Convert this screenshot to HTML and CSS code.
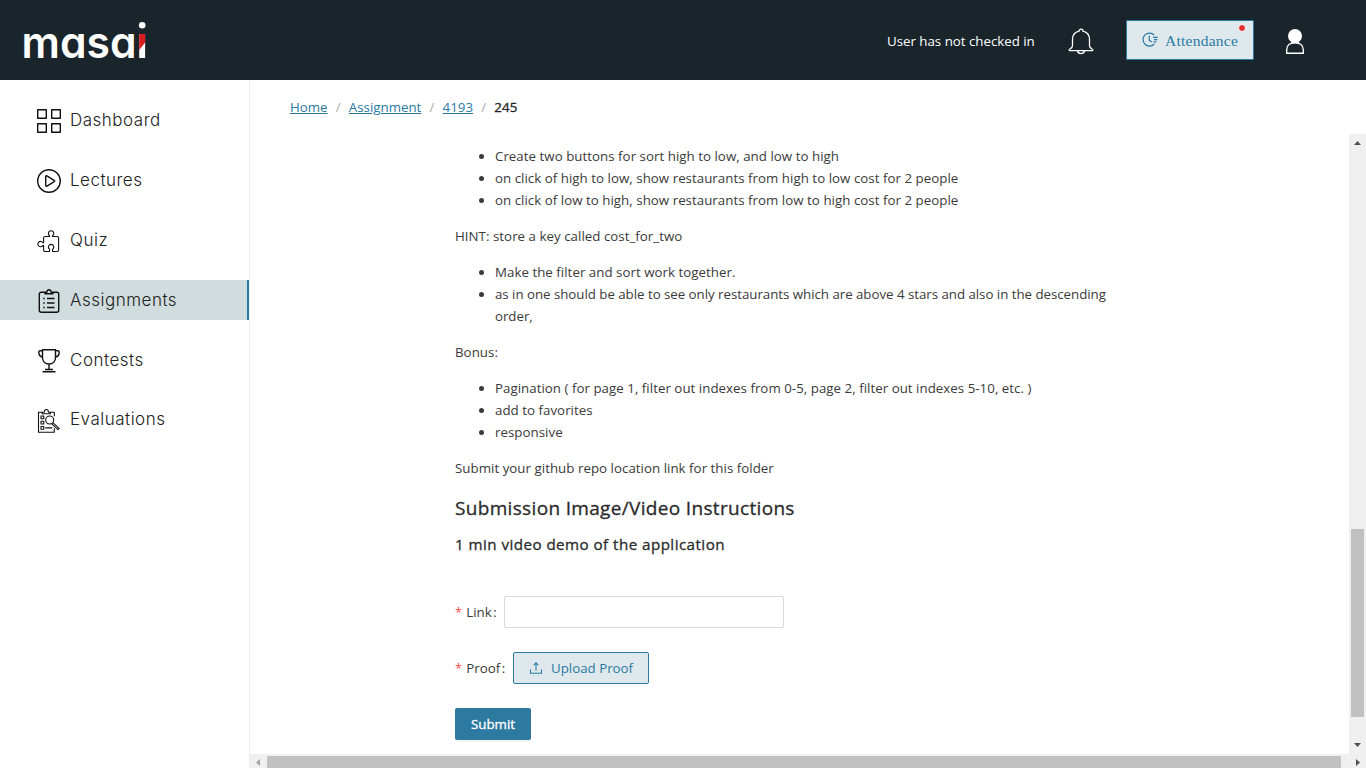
FILE: index.html
```html
<!DOCTYPE html>
<html lang="en">
<head>
<meta charset="utf-8">
<title>Masai - Assignment</title>
<link rel="stylesheet" href="styles.css">
</head>
<body>
<header class="topbar">
  <svg class="logo" width="124" height="42" viewBox="0 0 124 42" role="img" aria-label="masai">
    <text class="logo-text" x="-2.500" y="39" textLength="115" lengthAdjust="spacingAndGlyphs">masa</text>
    <path d="M115.200 15h5.900v24h-5.900z" fill="#fff"/>
    <path d="M115.200 15h5.900v8.500l-5.900 7.500z" fill="#dd1b23"/>
    <circle cx="118.200" cy="6.300" r="3.300" fill="#fff"/>
  </svg>
  <div class="top-actions">
    <span class="status">User has not checked in</span>
    <svg class="bell" width="26" height="28" viewBox="0 0 26 28" fill="none" stroke="#fff" stroke-width="1.300">
      <path d="M11 3.200C11 .5 15 .5 15 3.200c4 1 6.500 4.300 6.500 8.300v6c0 1.500.8 2.500 2.200 3.200 1.700.9 1.400 2-.2 2h-21c-1.600 0-1.900-1.100-.2-2 1.400-.7 2.200-1.700 2.200-3.200v-6c0-4 2.500-7.300 6.500-8.300zM9.500 22.700c.5 4 6.500 4 7 0"/>
    </svg>
    <button class="attendance">
      <svg width="16" height="16" viewBox="0 0 16 16" fill="none" stroke="#2a7aa3" stroke-width="1.200"><path d="M12.300 3.200A6.500 6.500 0 1 0 12.300 12M7.300 3.800v4.500l2.500 1.800M11 5.300h4.800M12 7.600h3.300M11.500 9.900h2.800"/></svg>
      <span>Attendance</span><i class="dot"></i>
    </button>
    <svg class="user" width="20" height="26" viewBox="0 0 20 26"><circle cx="10" cy="7" r="7" fill="#fff"/><path d="M1.700 24.200v-3.500c0-4.400 3.400-7 8.300-7s8.300 2.600 8.300 7v3.500z" fill="#1a242b" stroke="#fff" stroke-width="1.400"/><path d="M6 12h8v2.200H6z" fill="#fff"/></svg>
  </div>
</header>
<div class="shell">
  <nav class="sidebar">
    <a class="nav-item"><svg class="nav-icon" viewBox="0 0 24 24"><path d="M.7.700h8.600v8.600H.7zM14.700.700h8.600v8.600h-8.600zM.7 14.700h8.600v8.600H.7zM14.700 14.700h8.600v8.600h-8.600z"/></svg><span>Dashboard</span></a>
    <a class="nav-item"><svg class="nav-icon" viewBox="0 0 24 24"><circle cx="12" cy="12" r="11.300"/><path d="M8.700 7.700c0-.8.600-1.100 1.200-.8l7.300 4.400c.6.400.6 1 0 1.400l-7.300 4.400c-.6.300-1.200 0-1.200-.8z"/></svg><span>Lectures</span></a>
    <a class="nav-item"><svg class="nav-icon thin" viewBox="0 0 24 24"><path d="M12.600 7.500v-.8a2.700 2.700 0 1 1 3 0v.8h4.400a1.600 1.600 0 0 1 1.600 1.600v11.800a1.600 1.600 0 0 1-1.600 1.600h-4.400v-2.200a2.700 2.700 0 1 0-3 0v2.200H8.200a1.600 1.600 0 0 1-1.600-1.600v-4.300h-.8a2.700 2.700 0 1 1 0-3h.8V9.100a1.600 1.600 0 0 1 1.600-1.600z"/></svg><span>Quiz</span></a>
    <a class="nav-item active"><svg class="nav-icon" viewBox="0 0 24 24"><path d="M8 3.200H4.300a2 2 0 0 0-2 2v16a2 2 0 0 0 2 2h15.400a2 2 0 0 0 2-2v-16a2 2 0 0 0-2-2H16M8 4.700V3.200h1.800C10.300 0 13.700 0 14.200 3.200H16v1.500zM10 9.500h7.500M10 14h7.500M10 18.500h7.500M6.200 9.500h1.500M6.200 14h1.500M6.200 18.500h1.500"/></svg><span>Assignments</span></a>
    <a class="nav-item"><svg class="nav-icon" viewBox="0 0 24 24"><path d="M5.500.7h13v7.800c0 4-2.700 6.500-6.500 6.500s-6.500-2.500-6.500-6.500zM5.500 1.700H3.300C1.600 1.700 1.500 3 2.200 5.500c.5 1.700 1.300 2.300 3.300 2.300M18.500 1.700h2.200c1.700 0 1.800 1.300 1.100 3.800-.5 1.700-1.300 2.300-3.300 2.300M12 15v6M8 20.500h8M5.500 22.800h13"/></svg><span>Contests</span></a>
    <a class="nav-item last"><svg class="nav-icon thin" viewBox="0 0 24 24"><path d="M7 3.200H1.500v20h15.800v-4M11.500 3.200h5.800v4M5.200 4.700V3.200h2C7.200-.4 11.500-.4 11.500 3.200h2v1.500zM4 7h2.800v2.800H4zM4 12.200h2.800V15H4zM4 17.500h2.800v2.800H4zM8.300 18.900h7M14.800 14.900l6.200 5.700 1.100-1.200-6.300-5.700"/><circle cx="12.700" cy="11" r="4"/></svg><span>Evaluations</span></a>
  </nav>
  <main class="main">
    <div class="crumbs"><a>Home</a><span>/</span><a>Assignment</a><span>/</span><a>4193</a><span>/</span><b>245</b></div>
    <div class="viewport">
      <div class="content">
        <ul>
          <li>Create two buttons for sort high to low, and low to high</li>
          <li>on click of high to low, show restaurants from high to low cost for 2 people</li>
          <li>on click of low to high, show restaurants from low to high cost for 2 people</li>
        </ul>
        <p>HINT: store a key called cost_for_two</p>
        <ul>
          <li>Make the filter and sort work together.</li>
          <li class="tight">as in one should be able to see only restaurants which are above 4 stars and also in the descending order,</li>
        </ul>
        <p>Bonus:</p>
        <ul>
          <li>Pagination ( for page 1, filter out indexes from 0-5, page 2, filter out indexes 5-10, etc. )</li>
          <li>add to favorites</li>
          <li>responsive</li>
        </ul>
        <p>Submit your github repo location link for this folder</p>
        <h3>Submission Image/Video Instructions</h3>
        <h4>1 min video demo of the application</h4>
        <form>
          <div class="field"><label class="l-link"><em>*</em><span>Link</span><span class="colon">:</span></label><input type="text"></div>
          <div class="field"><label class="l-proof"><em>*</em><span>Proof</span><span class="colon">:</span></label>
            <button type="button" class="upload"><svg width="14" height="14" viewBox="0 0 14 14" fill="none" stroke="#2a7aa3" stroke-width="1.100"><path d="M1.500 8.500v3.800h11V8.500M7 9.500V2M4.800 4.200 7 1.900l2.200 2.300"/></svg><span>Upload Proof</span></button></div>
          <button type="button" class="submit">Submit</button>
        </form>
      </div>
      <div class="vbar">
        <svg width="7" height="4" viewBox="0 0 7 4"><path d="M0 4 3.500 0 7 4z"/></svg>
        <div class="vthumb"></div>
        <svg width="7" height="4" viewBox="0 0 7 4"><path d="M0 0h7L3.500 4z"/></svg>
      </div>
    </div>
    <div class="hbar">
      <svg class="dim" width="4" height="7" viewBox="0 0 4 7"><path d="M4 0v7L0 3.500z"/></svg>
      <div class="hthumb"></div>
      <svg width="4" height="7" viewBox="0 0 4 7"><path d="M0 0v7l4-3.500z"/></svg>
    </div>
  </main>
</div>
</body>
</html>
```

FILE: styles.css
```css
* { box-sizing: border-box; }
body { margin: 0; height: 768px; overflow: hidden; display: flex; flex-direction: column; background: #fff; color: #3a3a3a; font: 13.3px/22px "Open Sans", "Noto Sans", sans-serif; }
svg { display: block; flex: none; }
button { font: inherit; cursor: pointer; }
.topbar { height: 80px; flex: none; background: #1a242b; display: flex; align-items: center; justify-content: space-between; padding: 0 61px 0 24px; }
.logo { overflow: visible; }
.logo-text { font: 600 44px Inter, sans-serif; font-feature-settings: "cv11"; fill: #fff; }
.top-actions { display: flex; align-items: center; }
.status { color: #fff; width: 147px; white-space: nowrap; margin-right: 34px; padding-top: 2px; letter-spacing: -.01px; }
.bell { margin: 4px 32px 0 0; }
.attendance { position: relative; width: 128px; height: 40px; border: 1px solid #2a7aa3; background: #dfe8ed; color: #2a7aa3; display: flex; align-items: center; gap: 7px; padding: 0 0 0 15px; margin-right: 31px; font: 15.5px "Liberation Serif", serif; letter-spacing: .25px; border-radius: 1px; }
.attendance span { padding-top: 2px; }
.dot { position: absolute; top: 3px; right: 7px; width: 8px; height: 8px; border: 1px solid #fff; border-radius: 50%; background: #df2f33; }
.user { margin-top: 4px; }
.shell { flex: 1; min-height: 0; display: flex; }
.sidebar { width: 250px; flex: none; padding-top: 20px; border-right: 1px solid #eeeef3; display: flex; flex-direction: column; gap: 20px; }
.nav-item { height: 40px; padding: 0 0 0 37px; display: flex; align-items: center; gap: 9px; font: 300 17px/24px Inter, sans-serif; letter-spacing: .5px; color: #222; }
.nav-item.last span { padding-bottom: 3px; }
.nav-item.active { background: #d0dcdd; border-right: 2px solid #2a7aa3; }
.nav-icon { width: 24px; height: 24px; margin-top: 2px; fill: none; stroke: #111; stroke-width: 1.4; stroke-linejoin: round; }
.thin { stroke-width: 1.1; }
.main { flex: 1; min-width: 0; display: flex; flex-direction: column; }
.crumbs { height: 54px; flex: none; padding: 16px 0 0 40px; display: flex; }
.crumbs a { color: #2a7aa3; text-decoration: underline; }
.crumbs span { color: #aaa; margin: 0 8.2px; }
.crumbs b { font-weight: 400; color: #222; -webkit-text-stroke: .3px currentColor; letter-spacing: .1px; }
.viewport { height: 620px; flex: none; display: flex; justify-content: space-between; }
.content { width: 876px; padding: 11px 0 0 205px; letter-spacing: .03px; }
.tight { letter-spacing: -.03px; }
ul { margin: 0 0 14px; padding-left: 40px; }
p { margin: 0 0 14px; }
h3 { margin: 15px 0 11px; font-size: 19px; line-height: 28px; font-weight: 400; letter-spacing: .33px; color: #2b2b2b; -webkit-text-stroke: .3px currentColor; }
h4 { margin: 0 0 40px; font-size: 15.2px; line-height: 23px; font-weight: 400; letter-spacing: .44px; color: #2b2b2b; -webkit-text-stroke: .3px currentColor; }
.field { height: 32px; display: flex; align-items: center; margin-bottom: 24px; }
.field label { white-space: nowrap; }
.field em { color: #ff4d4f; font-style: normal; font-size: 13px; margin-right: 4px; }
.colon { margin-left: 1.5px; }
.l-link { width: 49px; }
.l-proof { width: 58px; }
.field input { width: 280px; height: 32px; border: 1px solid #d9d9d9; border-radius: 2px; background: #fff; }
.upload { width: 136px; height: 32px; border: 1px solid #2a7aa3; border-radius: 2px; background: #dfe8ed; color: #2a7aa3; display: flex; align-items: center; gap: 8px; padding: 0 0 0 15px; white-space: nowrap; }
.submit { width: 76px; height: 32px; border: 0; border-radius: 2px; background: #2d7aa0; color: #fff; padding: 0; -webkit-text-stroke: .3px currentColor; box-shadow: 0 2px 0 rgba(0,0,0,.04); }
.vbar { width: 17px; background: #f0f0f0; display: flex; flex-direction: column; align-items: center; padding: 7px 0; }
.vbar svg, .hbar svg { fill: #505050; }
.vthumb { width: 13px; height: 188px; background: #c1c1c1; margin: 384px 0 26px; }
.hbar { height: 14px; background: #f0f0f0; display: flex; align-items: center; padding: 2px 0 0 6px; }
.hthumb { width: 1074px; height: 12px; background: #c1c1c1; margin: 0 15px 0 7px; }
.hbar .dim { fill: #a3a3a3; }
```
